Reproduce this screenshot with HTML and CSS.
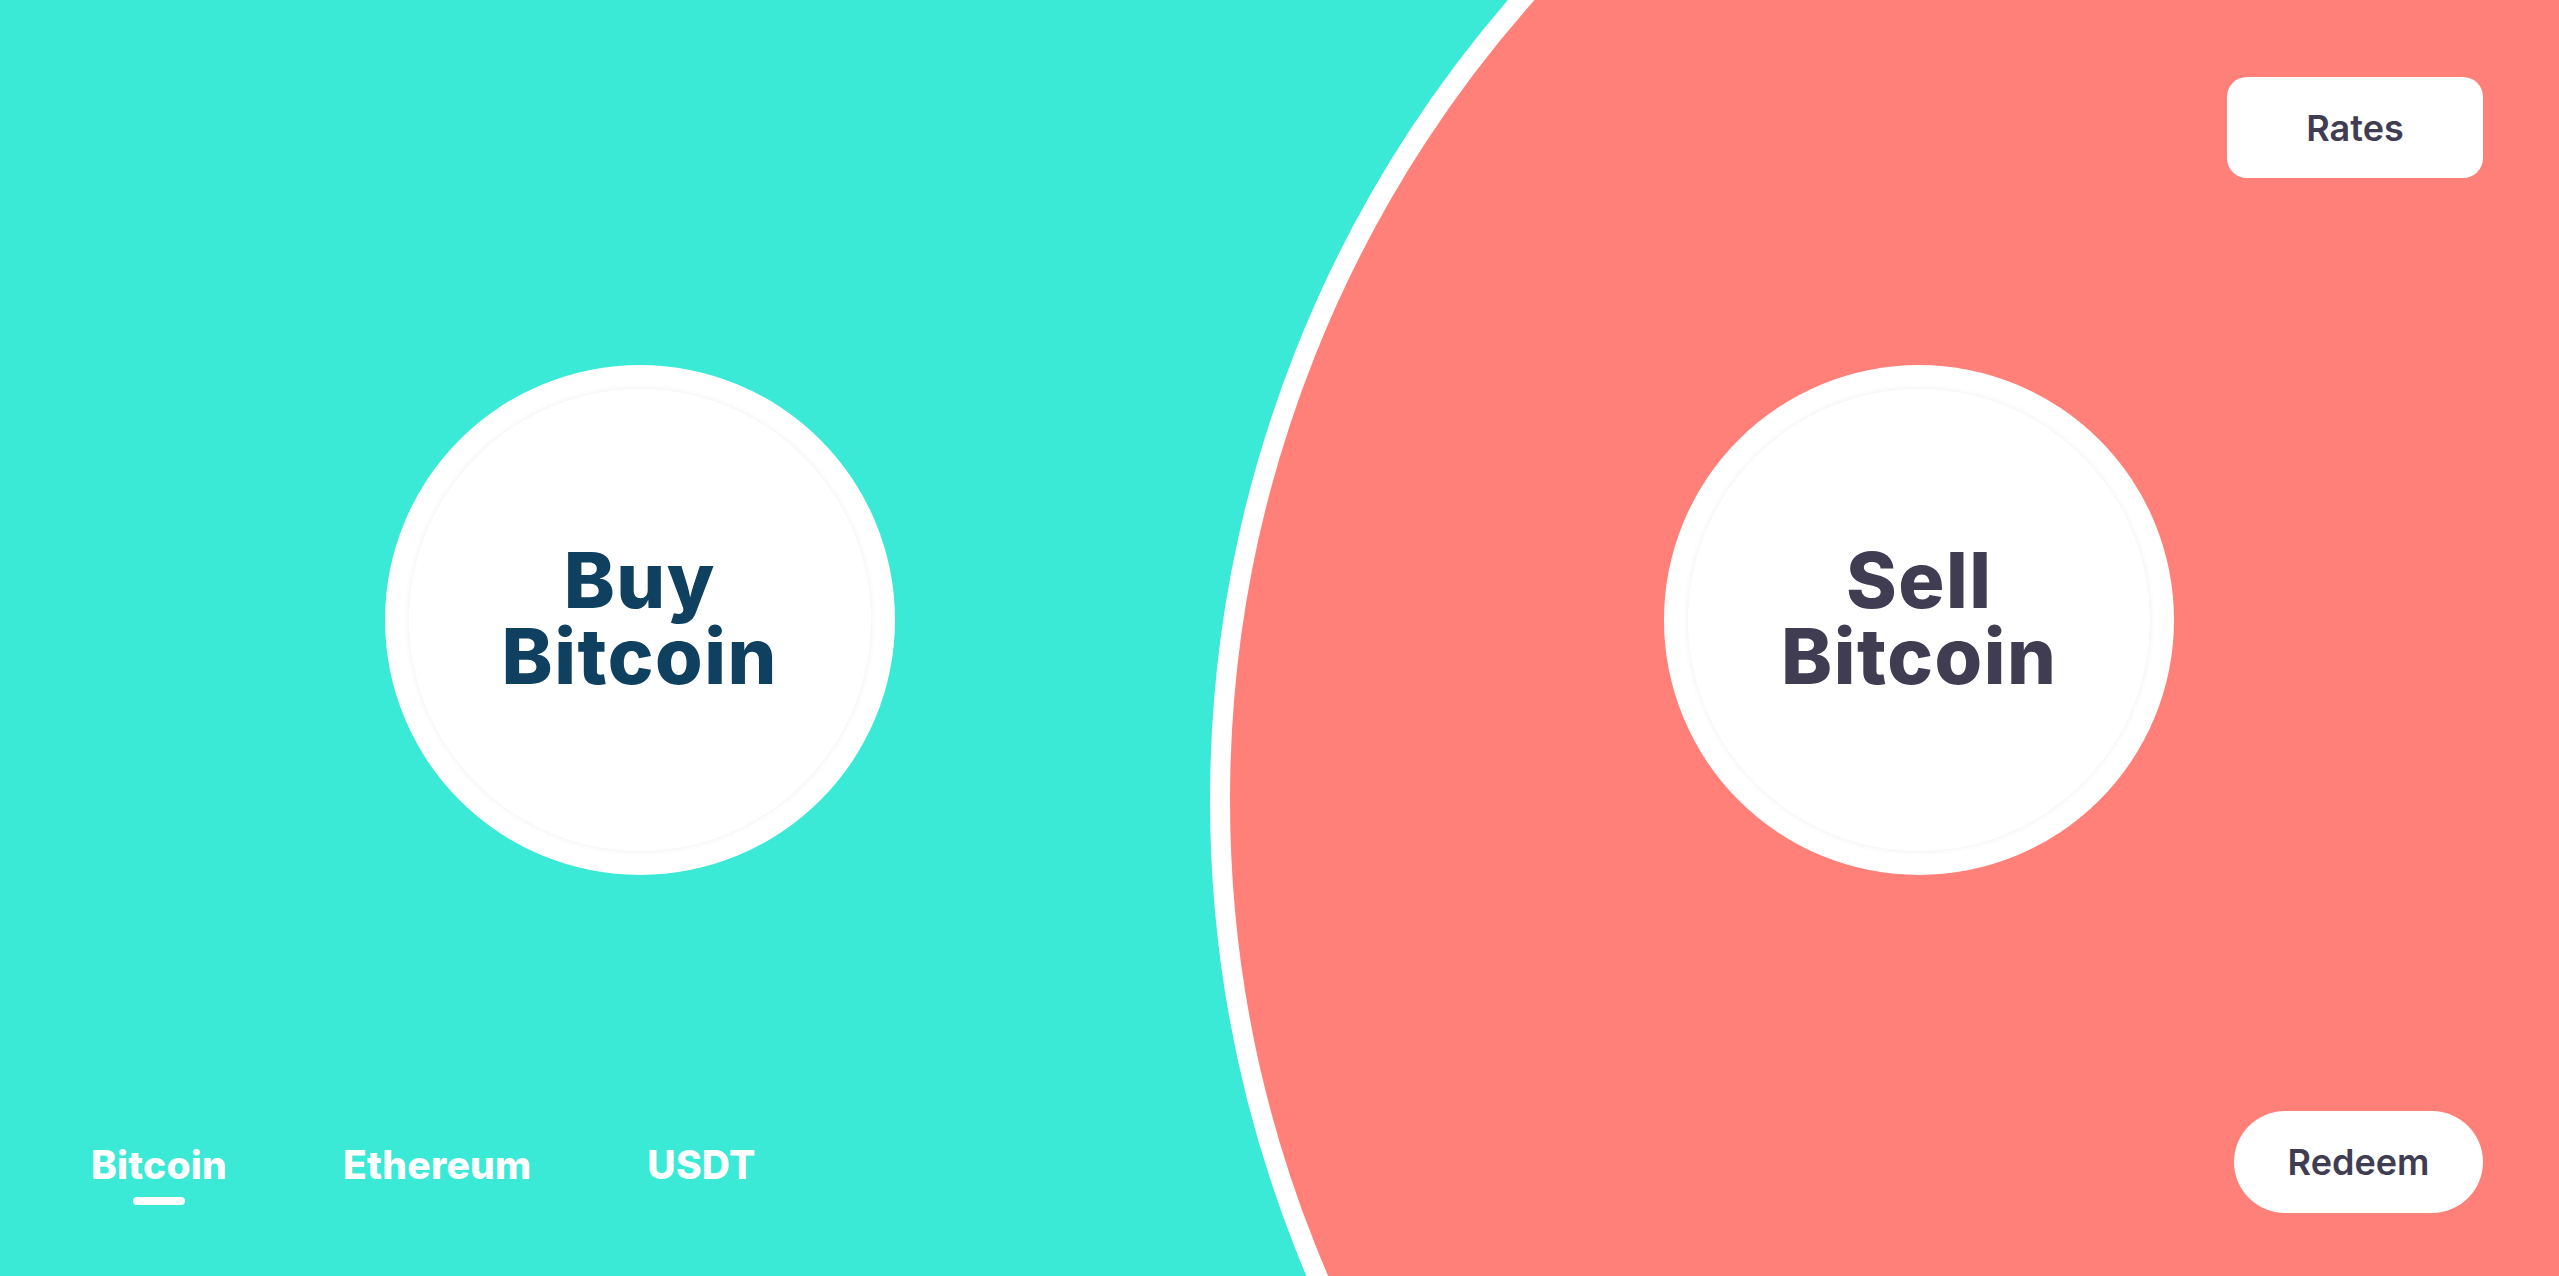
FILE: index.html
```html
<!DOCTYPE html>
<html lang="en">
<head>
<meta charset="utf-8">
<title>Buy / Sell Bitcoin</title>
<link rel="stylesheet" href="styles.css">
</head>
<body>
<div class="page">
  <div class="arc"></div>
  <main class="halves">
    <section class="half">
      <a class="coin-btn coin-buy" href="#">
        <span class="coin-inner"><span class="coin-label">Buy<br>Bitcoin</span></span>
      </a>
    </section>
    <section class="half">
      <a class="coin-btn coin-sell" href="#">
        <span class="coin-inner"><span class="coin-label">Sell<br>Bitcoin</span></span>
      </a>
    </section>
  </main>
  <header class="topbar">
    <a class="pill-btn rates" href="#">Rates</a>
  </header>
  <footer class="bottombar">
    <nav class="tabs">
      <a class="tab active" href="#">Bitcoin</a>
      <a class="tab" href="#">Ethereum</a>
      <a class="tab" href="#">USDT</a>
    </nav>
    <a class="pill-btn redeem" href="#">Redeem</a>
  </footer>
</div>
</body>
</html>
```

FILE: styles.css
```css
* { box-sizing: border-box; }
html, body { margin: 0; padding: 0; height: 100%; }
body {
  background: #3ae9d6;
  font-family: Inter, "Noto Sans", sans-serif;
  overflow: hidden;
}
a { text-decoration: none; }

.page {
  position: relative;
  width: 100%;
  height: 100vh;
  overflow: hidden;
  background: #3ae9d6;
}

.arc {
  position: absolute;
  left: 1210px;
  top: -423px;
  width: 2446px;
  height: 2446px;
  border-radius: 50%;
  border: 20px solid #ffffff;
  background: #ff8079;
}

.halves {
  position: relative;
  display: grid;
  grid-template-columns: 1fr 1fr;
  height: 100%;
}
.half {
  display: flex;
  align-items: center;
  justify-content: center;
  padding-bottom: 36px;
}

.coin-btn {
  width: 510px;
  height: 510px;
  border-radius: 50%;
  background: #ffffff;
  display: flex;
  align-items: center;
  justify-content: center;
}
.coin-inner {
  width: 462px;
  height: 462px;
  border-radius: 50%;
  background: #ffffff;
  box-shadow: 0 0 6px rgba(0, 0, 0, 0.07);
  display: flex;
  align-items: center;
  justify-content: center;
}
.coin-label {
  font-family: Inter, sans-serif;
  font-weight: 800;
  font-size: 77px;
  line-height: 76px;
  text-align: center;
  letter-spacing: 1.5px;
  margin-top: -4px;
}
.coin-buy .coin-label { color: #0f405f; }
.coin-sell .coin-label { color: #403d53; }

.topbar {
  position: absolute;
  top: 77px;
  right: 76px;
}
.pill-btn {
  display: flex;
  align-items: center;
  justify-content: center;
  background: #ffffff;
  color: #403d53;
  font-family: Inter, sans-serif;
  font-weight: 600;
  font-size: 36px;
}
.rates {
  width: 256px;
  height: 101px;
  border-radius: 20px;
}
.redeem {
  width: 249px;
  height: 102px;
  border-radius: 51px;
}

.bottombar {
  position: absolute;
  left: 91px;
  right: 76px;
  bottom: 63px;
  display: flex;
  align-items: center;
  justify-content: space-between;
}
.tabs {
  display: flex;
  gap: 116px;
  margin-bottom: -6px;
}
.tab {
  position: relative;
  color: #ffffff;
  font-family: Inter, sans-serif;
  font-weight: 800;
  font-size: 39px;
  line-height: 44px;
  letter-spacing: 0.2px;
}
.tab.active::after {
  content: "";
  position: absolute;
  left: 50%;
  bottom: -18px;
  width: 52px;
  height: 8px;
  margin-left: -26px;
  border-radius: 4px;
  background: #ffffff;
}
```
